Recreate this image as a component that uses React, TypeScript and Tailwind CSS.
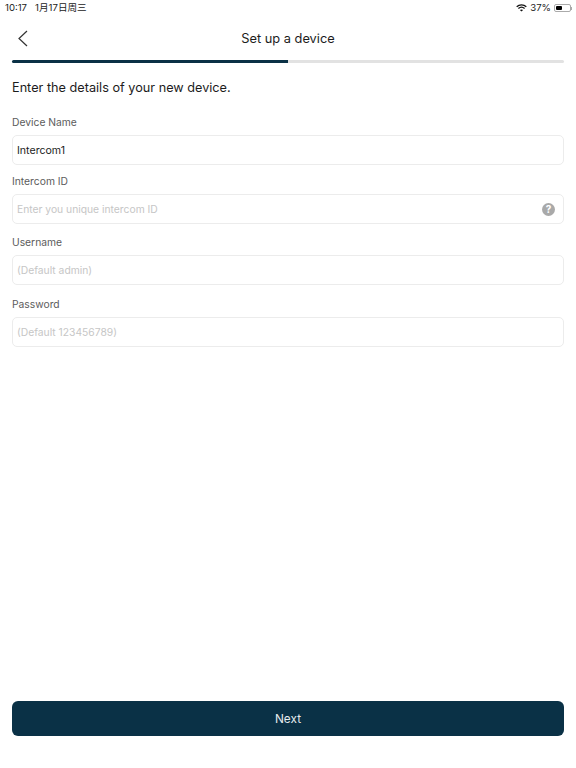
const font = { fontFamily: "Inter, 'Noto Sans CJK SC', sans-serif" };

function Field({ label, value, placeholder, help, className }: { label: string; value?: string; placeholder?: string; help?: boolean; className: string }) {
  return (
    <div className={className}>
      <div className="h-[15px] text-[10.3px] leading-[15px] text-[#5c5c5c]">{label}</div>
      <div className="mt-[5px] h-[30px] flex items-center justify-between rounded-[5px] border border-[#ececec] bg-white pl-[4px] pr-[8px]">
        {value ? (
          <span className="pt-[2px] text-[10.6px] text-[#1c1c1c]">{value}</span>
        ) : (
          <span className="pt-[2px] text-[10.3px] text-[#c6c6c6]">{placeholder}</span>
        )}
        {help && (
          <span className="w-[13px] h-[13px] rounded-full bg-[#a9a9a9] text-white text-[10px] font-bold leading-[13px] text-center">?</span>
        )}
      </div>
    </div>
  );
}

export default function App() {
  return (
    <div className="w-[576px] h-[768px] bg-white flex flex-col overflow-hidden" style={font}>
      {/* Status bar */}
      <div className="h-[15px] pt-[1px] flex items-center justify-between pl-[5px] pr-[4px] text-[9.6px] text-[#222]">
        <div className="flex gap-[8px]">
          <span>10:17</span>
          <span>1月17日周三</span>
        </div>
        <div className="flex items-center gap-[3px]">
          <svg width="11" height="8" viewBox="0 0 11 8" fill="none" stroke="#111" strokeWidth="1.3">
            <path d="M0.7 2.8C3.4 0.2 7.6 0.2 10.3 2.8" />
            <path d="M2.4 4.5C4.2 2.9 6.8 2.9 8.6 4.5" />
            <path d="M5.5 7.6L3.9 6C4.8 5.3 6.2 5.3 7.1 6Z" fill="#111" stroke="none" />
          </svg>
          <span>37%</span>
          <div className="flex items-center">
            <div className="w-[17px] h-[8px] rounded-[2px] border border-[#aaa] p-[1px]">
              <div className="w-[6px] h-full bg-black rounded-[1px]" />
            </div>
            <div className="w-[1px] h-[3px] bg-[#aaa]" />
          </div>
        </div>
      </div>

      {/* Header */}
      <div className="relative h-[45px] pt-[2px] flex items-center justify-center text-[12.8px] text-[#1c1c1c]">
        <svg className="absolute left-[17px] top-[15px]" width="12" height="18" viewBox="0 0 12 18" fill="none" stroke="#333" strokeWidth="1.2">
          <path d="M10 1L2 8.5L10 16" />
        </svg>
        Set up a device
      </div>

      {/* Progress */}
      <div className="mx-[12px] h-[3px] rounded-full bg-[#e2e2e2]">
        <div className="w-1/2 h-full rounded-l-full bg-[#0a3146]" />
      </div>

      <div className="mt-[16px] mx-[12px] h-[18px] text-[12.7px] leading-[18px] text-[#1c1c1c]">Enter the details of your new device.</div>

      <div className="mx-[12px] flex-1 flex flex-col">
        <Field className="mt-[18px]" label="Device Name" value="Intercom1" />
        <Field className="mt-[9px]" label="Intercom ID" placeholder="Enter you unique intercom ID" help />
        <Field className="mt-[11px]" label="Username" placeholder="(Default admin)" />
        <Field className="mt-[12px]" label="Password" placeholder="(Default 123456789)" />
      </div>

      <button className="mx-[12px] mb-[32px] h-[35px] pt-[2px] rounded-[6px] bg-[#0a3146] text-[#e6ecef] text-[11.8px]">Next</button>
    </div>
  );
}
